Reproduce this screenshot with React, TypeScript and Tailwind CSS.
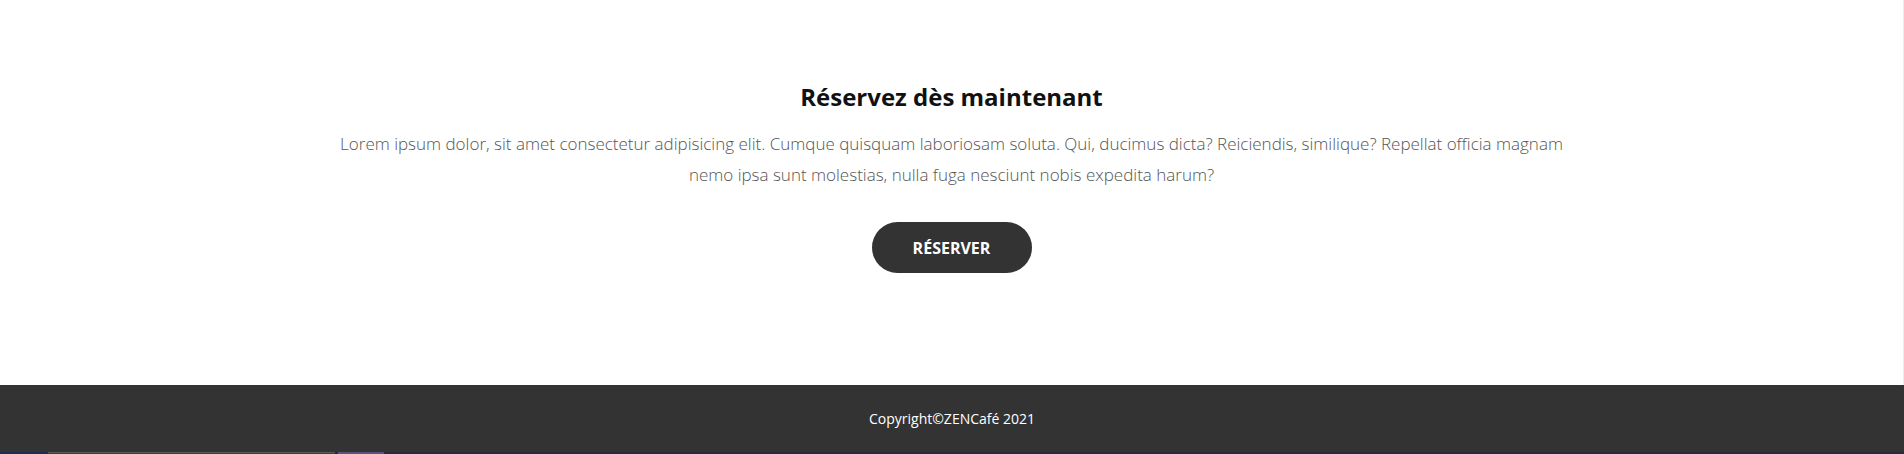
import React from 'react';

const App = () => {
  return (
    <div className="w-full bg-white font-['Open_Sans',sans-serif]">
      {/* Booking call to action */}
      <section className="bg-white pt-[79px] pb-[112px] text-center border-r border-[#ececec]">
        <h2 className="text-2xl font-bold leading-9 text-[#111]">Réservez dès maintenant</h2>
        <p className="mx-auto mt-[13px] max-w-[1250px] text-[17px] font-light leading-[31px] text-[#555]">
          Lorem ipsum dolor, sit amet consectetur adipisicing elit. Cumque quisquam laboriosam soluta. Qui, ducimus dicta? Reiciendis, similique? Repellat officia magnam nemo ipsa sunt molestias, nulla fuga nesciunt nobis expedita harum?
        </p>
        <button className="mt-8 h-[51px] w-[160px] rounded-full bg-[#333] text-base font-bold uppercase text-white">
          Réserver
        </button>
      </section>

      {/* Footer */}
      <footer className="flex h-[67px] items-center justify-center bg-[#333] text-sm text-white">
        Copyright©ZENCafé 2021
      </footer>

      {/* strip peeking in at the bottom edge */}
      <div className="flex h-[2px]">
        <div className="w-[48px] bg-[#1f2b47]"></div>
        <div className="w-[287px] border-t border-[#5a5a5a] bg-[#3d3d3d]"></div>
        <div className="w-[3px] bg-[#2a2a2a]"></div>
        <div className="w-[46px] bg-[#5a5478]"></div>
        <div className="w-[2px] bg-[#2a2a2a]"></div>
        <div className="flex-1 bg-[#2f2838]"></div>
      </div>
    </div>
  );
};

export default App;
